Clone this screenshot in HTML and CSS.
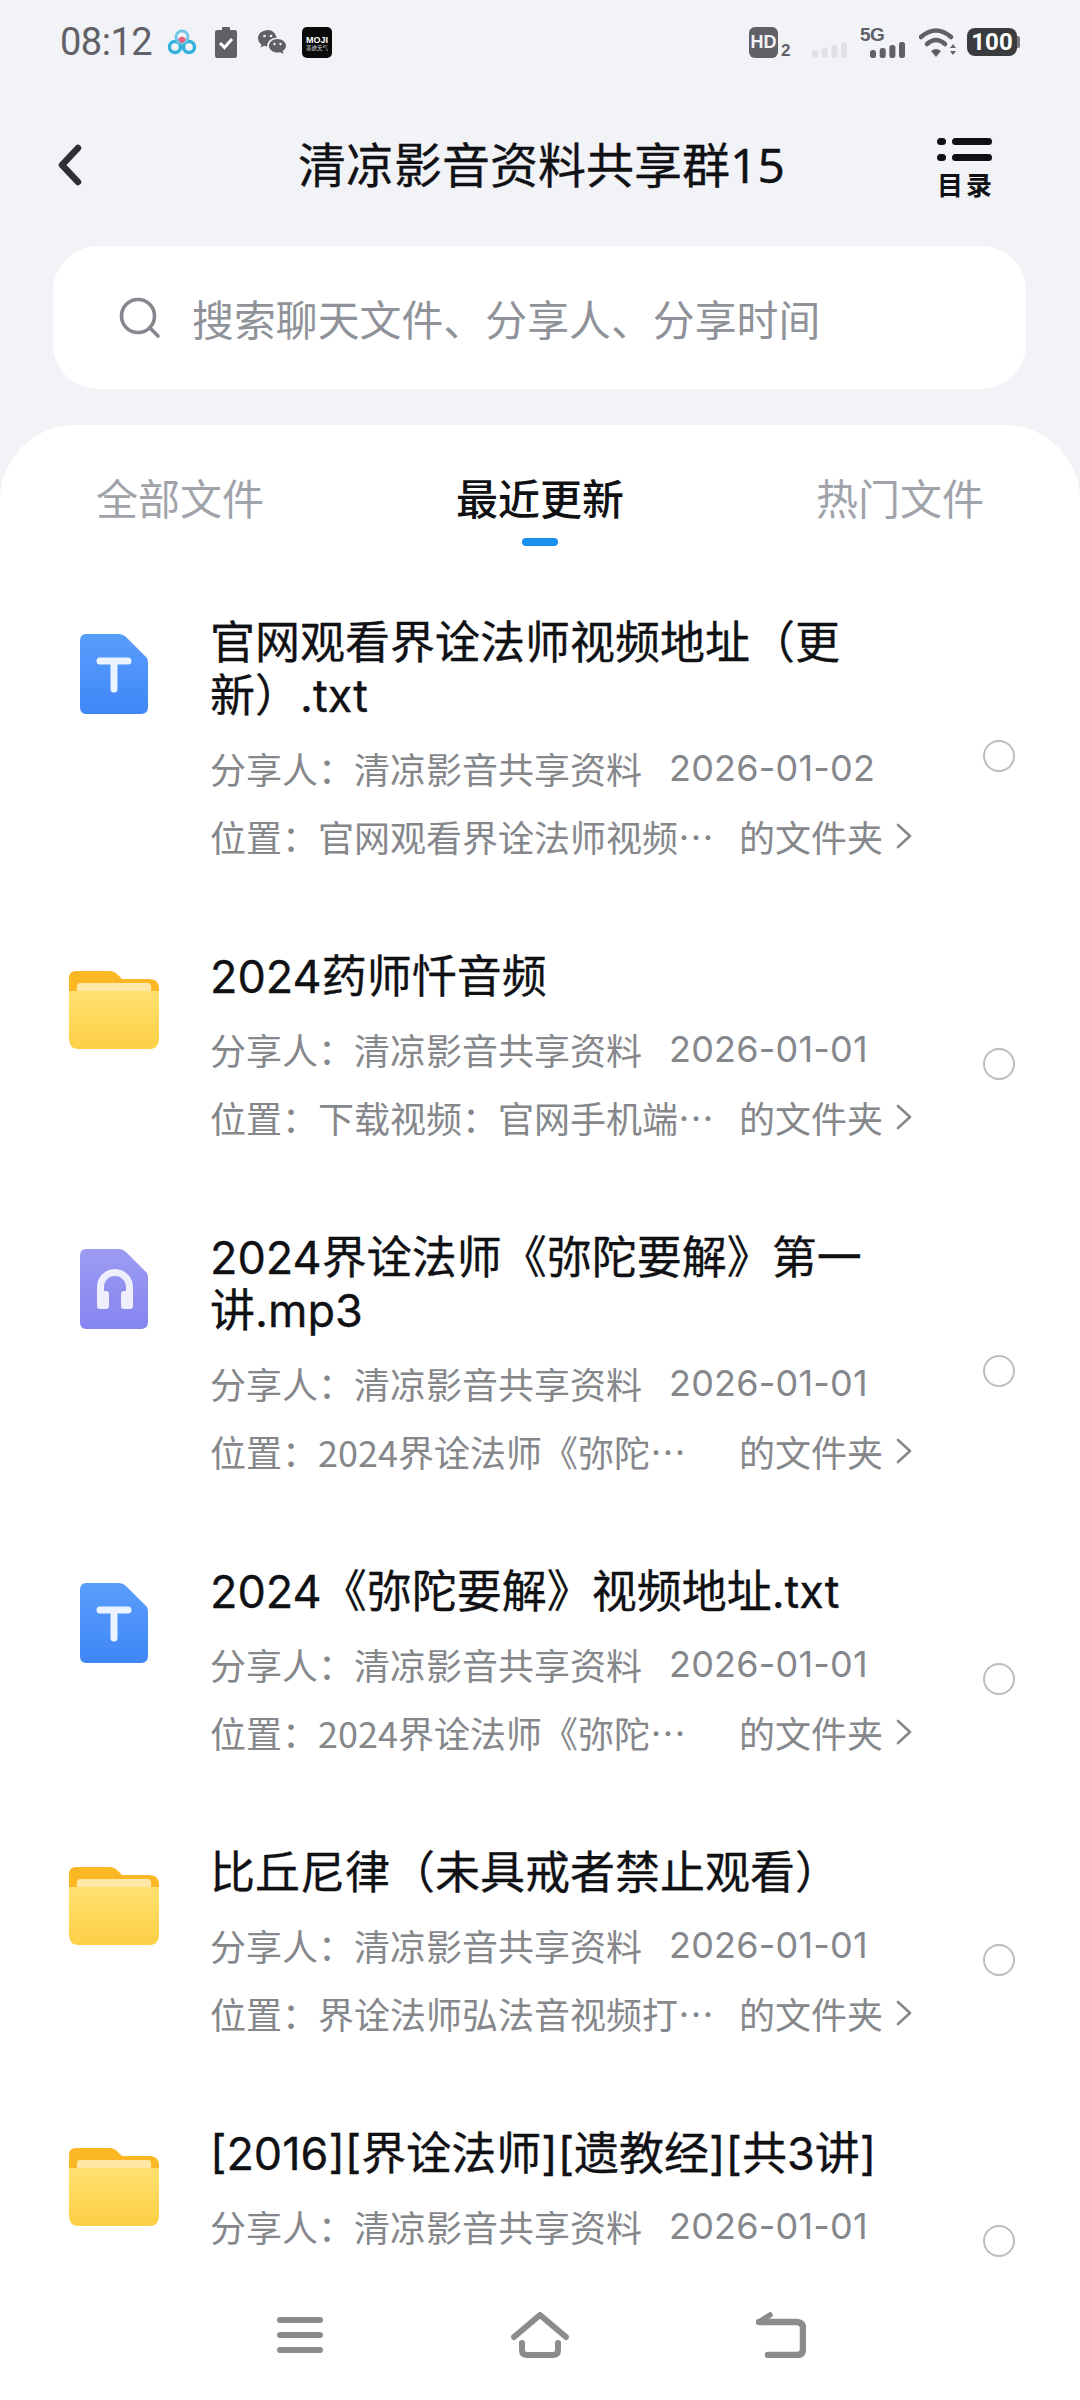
FILE: index.html
```html
<!DOCTYPE html>
<html lang="zh-CN">

<head>
    <meta charset="UTF-8" />
    <meta name="viewport" content="width=device-width, initial-scale=1.0" />
    <title>清凉影音资料共享群15</title>
    <link rel="stylesheet" href="styles.css">
</head>

<body>
    <svg class="defs" width="0" height="0">
        <defs>
            <linearGradient id="blueGrad" x1="0" y1="0" x2="0" y2="1">
                <stop offset="0" stop-color="#5a9efb" />
                <stop offset="1" stop-color="#3f86f7" />
            </linearGradient>
            <linearGradient id="purpleGrad" x1="0" y1="0" x2="0" y2="1">
                <stop offset="0" stop-color="#9c9cf2" />
                <stop offset="1" stop-color="#8585f0" />
            </linearGradient>
            <linearGradient id="folderGrad" x1="0" y1="0" x2="0" y2="1">
                <stop offset="0" stop-color="#ffe070" />
                <stop offset="1" stop-color="#fdd045" />
            </linearGradient>
            <symbol id="iconText" viewBox="0 0 92 84">
                <path d="M18 0H51Q55 0 58 3L79 24Q80 26 80 29V73Q80 80 73 80H18Q12 80 12 73V7Q12 0 18 0Z" fill="url(#blueGrad)" />
                <path d="M32 27H60M46 27V55" fill="none" stroke="#eaf3ff" stroke-width="7" stroke-linecap="round" />
            </symbol>
            <symbol id="iconAudio" viewBox="0 0 92 84">
                <path d="M18 0H51Q55 0 58 3L79 24Q80 26 80 29V73Q80 80 73 80H18Q12 80 12 73V7Q12 0 18 0Z" fill="url(#purpleGrad)" />
                <path d="M32.500 46V38A14.500 14.500 0 0 1 61.500 38V46" fill="none" stroke="#eeeefd" stroke-width="7" />
                <rect x="29" y="42" width="12" height="18" rx="3" fill="#eeeefd" />
                <rect x="53" y="42" width="12" height="18" rx="3" fill="#eeeefd" />
            </symbol>
            <symbol id="iconFolder" viewBox="0 0 92 84">
                <path d="M8 3H42Q46 3 49 6L54 11H82Q91 11 91 21V30H1V10Q1 3 8 3Z" fill="#fbb824" />
                <rect x="9" y="15" width="74" height="16" rx="3" fill="#ffe7a6" />
                <path d="M1 23H91V71Q91 81 81 81H11Q1 81 1 71Z" fill="url(#folderGrad)" />
            </symbol>
            <symbol id="chevron" viewBox="0 0 16 26">
                <path d="M2 2L14 13L2 24" fill="none" stroke="#85878b" stroke-width="2.600" stroke-linecap="round" stroke-linejoin="round" />
            </symbol>
        </defs>
    </svg>

    <div class="status-bar">
        <span class="clock">08:12</span>
        <svg class="st-cloud" width="30" height="26" viewBox="0 0 30 26">
            <circle cx="8" cy="18" r="5.500" fill="none" stroke="#35b2dc" stroke-width="3.500" />
            <circle cx="22" cy="18" r="5.500" fill="none" stroke="#35b2dc" stroke-width="3.500" />
            <circle cx="15" cy="8" r="6" fill="none" stroke="#6fc6e6" stroke-width="3" />
            <path d="M11 10Q15 18 19 10Q15 5 11 10Z" fill="#e8637f" />
        </svg>
        <svg class="st-clip" width="22" height="31" viewBox="0 0 22 31">
            <path d="M2 3H7V1Q7 0 8 0H14Q15 0 15 1V3H20Q22 3 22 5V29Q22 31 20 31H2Q0 31 0 29V5Q0 3 2 3Z" fill="#5f6166" />
            <path d="M5 16L9.500 20.500L17 12" fill="none" stroke="#fff" stroke-width="3" />
        </svg>
        <svg class="st-chat" width="28" height="25" viewBox="0 0 28 25">
            <path d="M10 0C4.500 0 0 3.600 0 8.200C0 10.700 1.300 12.900 3.500 14.400L2.500 17.500L6.300 15.700C7.300 16 8.300 16.200 9.300 16.300C8.900 11.500 13 8 18.800 7.800C17.700 3.300 14.200 0 10 0Z" fill="#5f6166" />
            <path d="M19.500 9C14.800 9 11 12 11 15.800C11 19.600 14.800 22.600 19.500 22.600C20.400 22.600 21.300 22.500 22.100 22.200L25.500 24L24.600 21.100C26.700 19.800 28 17.900 28 15.800C28 12 24.200 9 19.500 9Z" fill="#5f6166" />
            <circle cx="6.500" cy="6" r="1.300" fill="#f1f3f7" />
            <circle cx="13" cy="6" r="1.300" fill="#f1f3f7" />
            <circle cx="16.500" cy="14" r="1.200" fill="#f1f3f7" />
            <circle cx="22.500" cy="14" r="1.200" fill="#f1f3f7" />
        </svg>
        <svg class="st-moji" width="30" height="31" viewBox="0 0 30 31">
            <rect width="30" height="31" rx="5" fill="#0a0a0a" />
            <text class="moji-big" x="15" y="16" text-anchor="middle">MOJI</text>
            <text class="moji-small" x="15" y="23" text-anchor="middle">墨迹天气</text>
        </svg>

        <div class="status-right">
            <div class="hd-group">
                <span class="hd-badge">HD</span>
                <span class="hd-sub">2</span>
            </div>
            <svg class="st-signal" width="35" height="17" viewBox="0 0 35 17">
                <rect x="0" y="9" width="6" height="8" rx="2.500" fill="#dfe1e5" />
                <rect x="9.700" y="7" width="6" height="10" rx="2.500" fill="#dfe1e5" />
                <rect x="19.400" y="4" width="6" height="13" rx="2.500" fill="#dfe1e5" />
                <rect x="29" y="1" width="6" height="16" rx="2.500" fill="#dfe1e5" />
            </svg>
            <div class="net">
                <span class="fiveg">5G</span>
                <svg class="net-bars" width="35" height="16" viewBox="0 0 35 16">
                    <rect x="0" y="8" width="6" height="8" rx="2.500" fill="#5f6166" />
                    <rect x="9.700" y="6" width="6" height="10" rx="2.500" fill="#5f6166" />
                    <rect x="19.400" y="3" width="6" height="13" rx="2.500" fill="#5f6166" />
                    <rect x="29" y="0" width="6" height="16" rx="2.500" fill="#5f6166" />
                </svg>
            </div>
            <svg class="st-wifi" width="37" height="30" viewBox="0 0 37 30">
                <path d="M2 10Q17 -3 32 10" fill="none" stroke="#5f6166" stroke-width="4.500" stroke-linecap="round" />
                <path d="M8 17Q17 9 26 17" fill="none" stroke="#5f6166" stroke-width="4.500" stroke-linecap="round" />
                <path d="M12 24Q17 20 22 24L17 30Z" fill="#5f6166" />
                <path d="M31 21L34 17L37 21ZM31 24H37L34 28Z" fill="#5f6166" />
            </svg>
            <div class="battery"><span class="battery-num">100</span></div>
            <div class="battery-tip"></div>
        </div>
    </div>

    <div class="header">
        <svg class="back" width="24" height="42" viewBox="0 0 24 42">
            <path d="M20 4L4 21L20 38" fill="none" stroke="#2e3033" stroke-width="6.500" stroke-linecap="round" stroke-linejoin="round" />
        </svg>
        <div class="page-title">清凉影音资料共享群15</div>
        <div class="toc">
            <div class="toc-line"><i></i><b></b></div>
            <div class="toc-line"><i></i><b></b></div>
            <div class="toc-text">目录</div>
        </div>
    </div>

    <div class="search">
        <svg class="search-icon" width="42" height="42" viewBox="0 0 42 42">
            <circle cx="19" cy="19" r="16.500" fill="none" stroke="#84878d" stroke-width="3.600" />
            <path d="M31 31L39 39" stroke="#84878d" stroke-width="3.600" stroke-linecap="round" />
        </svg>
        <span>搜索聊天文件、分享人、分享时间</span>
    </div>

    <div class="sheet">
        <div class="tabs">
            <div class="tab">全部文件</div>
            <div class="tab active">最近更新</div>
            <div class="tab">热门文件</div>
        </div>

        <div class="file-list">
            <div class="file-row">
                <svg class="file-icon"><use href="#iconText" /></svg>
                <div class="file-info">
                    <div class="file-name">官网观看界诠法师视频地址（更新）.txt</div>
                    <div class="file-meta"><span class="sharer">分享人：清凉影音共享资料</span><span class="date">2026-01-02</span></div>
                    <div class="file-path"><span class="path-text">位置：官网观看界诠法师视频…</span><span>的文件夹</span><svg class="chev"><use href="#chevron" /></svg></div>
                </div>
                <div class="radio"></div>
            </div>

            <div class="file-row">
                <svg class="file-icon"><use href="#iconFolder" /></svg>
                <div class="file-info">
                    <div class="file-name">2024药师忏音频</div>
                    <div class="file-meta"><span class="sharer">分享人：清凉影音共享资料</span><span class="date">2026-01-01</span></div>
                    <div class="file-path"><span class="path-text">位置：下载视频：官网手机端…</span><span>的文件夹</span><svg class="chev"><use href="#chevron" /></svg></div>
                </div>
                <div class="radio"></div>
            </div>

            <div class="file-row">
                <svg class="file-icon"><use href="#iconAudio" /></svg>
                <div class="file-info">
                    <div class="file-name">2024界诠法师《弥陀要解》第一讲.mp3</div>
                    <div class="file-meta"><span class="sharer">分享人：清凉影音共享资料</span><span class="date">2026-01-01</span></div>
                    <div class="file-path"><span class="path-text">位置：2024界诠法师《弥陀…</span><span>的文件夹</span><svg class="chev"><use href="#chevron" /></svg></div>
                </div>
                <div class="radio"></div>
            </div>

            <div class="file-row">
                <svg class="file-icon"><use href="#iconText" /></svg>
                <div class="file-info">
                    <div class="file-name">2024《弥陀要解》视频地址.txt</div>
                    <div class="file-meta"><span class="sharer">分享人：清凉影音共享资料</span><span class="date">2026-01-01</span></div>
                    <div class="file-path"><span class="path-text">位置：2024界诠法师《弥陀…</span><span>的文件夹</span><svg class="chev"><use href="#chevron" /></svg></div>
                </div>
                <div class="radio"></div>
            </div>

            <div class="file-row">
                <svg class="file-icon"><use href="#iconFolder" /></svg>
                <div class="file-info">
                    <div class="file-name">比丘尼律（未具戒者禁止观看）</div>
                    <div class="file-meta"><span class="sharer">分享人：清凉影音共享资料</span><span class="date">2026-01-01</span></div>
                    <div class="file-path"><span class="path-text">位置：界诠法师弘法音视频打…</span><span>的文件夹</span><svg class="chev"><use href="#chevron" /></svg></div>
                </div>
                <div class="radio"></div>
            </div>

            <div class="file-row last">
                <svg class="file-icon"><use href="#iconFolder" /></svg>
                <div class="file-info">
                    <div class="file-name">[2016][界诠法师][遗教经][共3讲]</div>
                    <div class="file-meta"><span class="sharer">分享人：清凉影音共享资料</span><span class="date">2026-01-01</span></div>
                </div>
                <div class="radio"></div>
            </div>
        </div>

        <div class="nav-bar">
            <svg width="46" height="36" viewBox="0 0 46 36">
                <path d="M3 3H43M3 18H43M3 33H43" stroke="#8c8c8c" stroke-width="6" stroke-linecap="round" />
            </svg>
            <svg width="58" height="46" viewBox="0 0 58 46">
                <path d="M3 25L29 3L55 25" fill="none" stroke="#8c8c8c" stroke-width="6" stroke-linecap="round" stroke-linejoin="round" />
                <path d="M11 31V38Q11 43 16 43H42Q47 43 47 38V31" fill="none" stroke="#8c8c8c" stroke-width="6" stroke-linecap="round" />
            </svg>
            <svg width="50" height="46" viewBox="0 0 50 46">
                <path d="M3 10H40Q47 10 47 16V37Q47 43 41 43H12" fill="none" stroke="#8c8c8c" stroke-width="6.500" stroke-linecap="round" />
                <path d="M3 10L14 3" fill="none" stroke="#8c8c8c" stroke-width="5.500" stroke-linecap="round" />
            </svg>
        </div>
    </div>
</body>

</html>
```

FILE: styles.css
```css
* {
    margin: 0;
    padding: 0;
    box-sizing: border-box;
}

body {
    width: 1080px;
    height: 2400px;
    background: #f1f3f7;
    display: flex;
    flex-direction: column;
    overflow: hidden;
    font-family: "Noto Sans", "Noto Sans CJK SC", sans-serif;
}

.defs {
    display: block;
}

/* status bar */
.status-bar {
    height: 84px;
    padding: 0 60px;
    display: flex;
    align-items: center;
}

.clock {
    font-family: Roboto, sans-serif;
    font-size: 38px;
    letter-spacing: -0.500px;
    color: #5f6166;
    width: 107px;
}

.st-clip {
    margin-left: 18px;
}

.st-chat {
    margin-left: 21px;
}

.st-moji {
    margin-left: 16px;
}

.moji-big {
    font-family: "Liberation Sans", sans-serif;
    font-size: 9px;
    font-weight: bold;
    fill: #fff;
}

.moji-small {
    font-family: "Noto Sans CJK SC", sans-serif;
    font-size: 5.500px;
    fill: #ddd;
}

.status-right {
    margin-left: auto;
    display: flex;
    align-items: center;
}

.hd-group {
    width: 42px;
    height: 31px;
    display: flex;
    align-items: flex-end;
    font-family: "Liberation Sans", sans-serif;
    font-weight: bold;
}

.hd-badge {
    width: 29px;
    height: 31px;
    border-radius: 6px;
    background: #5f6166;
    color: #f1f3f7;
    font-size: 18px;
    line-height: 31px;
    text-align: center;
}

.hd-sub {
    margin-left: 3px;
    font-size: 17px;
    line-height: 15px;
    color: #5f6166;
}

.st-signal {
    margin: 14px 0 0 21px;
}

.net {
    width: 45px;
    height: 31px;
    margin-left: 13px;
    display: flex;
    flex-direction: column;
    justify-content: space-between;
}

.fiveg {
    font-family: "Liberation Sans", sans-serif;
    font-size: 19px;
    line-height: 15px;
    font-weight: bold;
    letter-spacing: -0.500px;
    color: #5f6166;
}

.net-bars {
    align-self: flex-end;
}

.st-wifi {
    margin-left: 14px;
}

.battery {
    margin-left: 11px;
    width: 50px;
    height: 28px;
    border-radius: 8px;
    background: #3a3b3e;
    color: #fff;
    display: flex;
    align-items: center;
    justify-content: center;
}

.battery-num {
    font-family: Roboto, sans-serif;
    font-size: 24px;
    line-height: 28px;
    font-weight: 700;
}

.battery-tip {
    width: 3px;
    height: 12px;
    border-radius: 0 2px 2px 0;
    background: #77797d;
}

/* header */
.header {
    height: 162px;
    padding: 0 88px 0 58px;
    display: flex;
    align-items: center;
}

.page-title {
    margin-left: 216px;
    font-size: 48px;
    line-height: 60px;
    color: #101114;
    -webkit-text-stroke: 0.300px #101114;
}

.toc {
    margin: 6px 0 0 auto;
    width: 55px;
}

.toc-line {
    display: flex;
    gap: 6px;
    margin-bottom: 9px;
}

.toc-line i {
    width: 9px;
    height: 7px;
    border-radius: 4px;
    background: #101114;
}

.toc-line b {
    flex: 1;
    height: 7px;
    border-radius: 4px;
    background: #101114;
}

.toc-text {
    font-family: "Noto Sans CJK SC", sans-serif;
    font-size: 26px;
    line-height: 28px;
    font-weight: 700;
    letter-spacing: 3px;
    color: #101114;
    white-space: nowrap;
}

/* search */
.search {
    height: 143px;
    margin: 0 54px 36px 53px;
    padding-left: 66px;
    border-radius: 45px;
    background: #fff;
    display: flex;
    align-items: center;
    gap: 31px;
    font-size: 41.900px;
    color: #8f9399;
}

/* list sheet */
.sheet {
    flex: 1;
    min-height: 0;
    background: #fff;
    border-radius: 75px 75px 0 0;
    display: flex;
    flex-direction: column;
}

.tabs {
    height: 165px;
    padding: 49px 96px 0 96px;
    display: flex;
    justify-content: space-between;
    align-items: flex-start;
}

.tab {
    font-size: 42px;
    line-height: 50px;
    color: #a0a4aa;
    display: flex;
    flex-direction: column;
    align-items: center;
}

.tab.active {
    color: #101114;
    font-weight: 500;
}

.tab.active::after {
    content: "";
    width: 36px;
    height: 8px;
    margin-top: 14px;
    border-radius: 4px;
    background: #1a8fef;
}

.file-list {
    flex: 1;
    min-height: 0;
    overflow: hidden;
}

.file-row {
    display: flex;
    align-items: center;
    padding: 26px 65px 54px 0;
}

.file-row.last {
    min-height: 281px;
}

.file-icon {
    align-self: flex-start;
    flex: none;
    width: 92px;
    height: 84px;
    margin: 18px 50px 0 68px;
}

.file-info {
    align-self: flex-start;
    width: 773px;
    flex: none;
    min-width: 0;
}

.file-name {
    width: 690px;
    margin-bottom: 12px;
    font-family: Inter, "Noto Sans CJK SC", sans-serif;
    font-size: 45px;
    line-height: 53px;
    color: #101114;
    -webkit-text-stroke: 0.300px #101114;
}

.file-meta,
.file-path {
    display: flex;
    align-items: center;
    height: 68px;
    font-size: 36px;
    color: #85878b;
    white-space: nowrap;
}

.sharer {
    width: 459px;
}

.date {
    font-family: Inter, sans-serif;
    letter-spacing: 0.200px;
}

.path-text {
    width: 529px;
    font-family: "Noto Sans CJK SC", sans-serif;
}

.chev {
    width: 16px;
    height: 26px;
    margin-left: 13px;
}

.radio {
    width: 32px;
    height: 32px;
    flex: none;
    margin-top: 26px;
    border: 2.500px solid #bdbdbd;
    border-radius: 50%;
}

/* bottom navigation */
.nav-bar {
    height: 130px;
    flex: none;
    padding: 0 274px 0 277px;
    display: flex;
    justify-content: space-between;
    align-items: center;
}
```
